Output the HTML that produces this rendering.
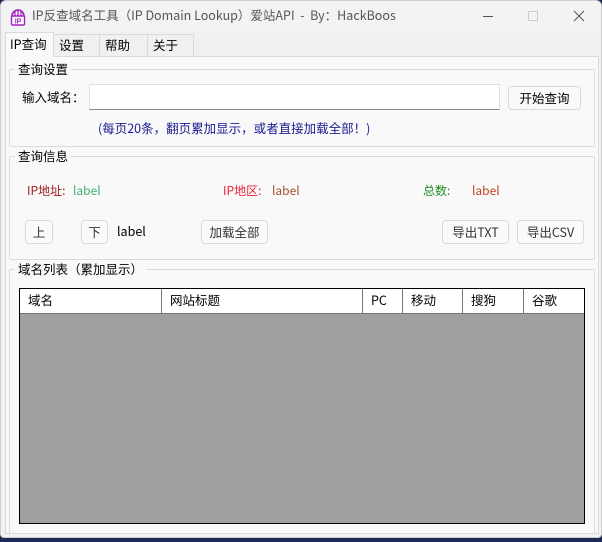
<!DOCTYPE html>
<html><head><meta charset="utf-8"><style>
*{margin:0;padding:0;box-sizing:border-box}
body{width:602px;height:542px;background:#1c2a55;font-family:"Noto Sans CJK SC","Liberation Sans",sans-serif;font-size:12px;line-height:16px;color:#000;position:relative;overflow:hidden}
.win{position:absolute;left:0;top:0;width:602px;height:538px;background:#f3f3f3;border:1px solid #cfcfcf;border-radius:6px 6px 4px 4px;overflow:hidden}
.a{position:absolute;white-space:nowrap;line-height:16px}
.tab{position:absolute;top:33px;height:22px;border:1px solid #dadada;border-bottom:none;background:#f0f0f0;font-size:12.5px;padding:2px 0 0 5px;line-height:16px}
.grp{position:absolute;border:1px solid #dcdcdc;border-radius:2px}
.gt{position:absolute;top:-9px;left:5px;background:#f9f9f9;padding:0 3px;font-size:12.5px;line-height:16px}
.btn{position:absolute;border:1px solid #dadada;border-radius:4px;background:#fafafa;text-align:center;font-size:12.5px;color:#333;line-height:21px}
.th{position:absolute;top:0;height:24px;border-right:1px solid #777;padding:3px 0 0 8px;font-size:12.5px;line-height:16px}
</style></head><body>
<div class="win">
<svg class="a" style="left:9px;top:7px" width="16" height="18" viewBox="0 0 16 18"><path d="M2 8 A6 6 0 0 1 14 8" fill="none" stroke="#a020c0" stroke-width="1.6"/><path d="M5 3 V8 M8 2 V8 M11 3 V8" stroke="#a020c0" stroke-width="1.2"/><rect x="1.5" y="8" width="13" height="9" rx="1" fill="#fff" stroke="#a020c0" stroke-width="1.4"/><text x="8" y="15.5" font-size="7" font-weight="bold" text-anchor="middle" fill="#a020c0" font-family="Liberation Sans">IP</text></svg>
<div class="a" style="left:31px;top:6px;font-size:12.5px;color:#555">IP反查域名工具（IP Domain Lookup）爱站API &nbsp;- &nbsp;By：HackBoos</div>
<div class="a" style="left:482px;top:15px;width:10px;border-top:1px solid #555"></div>
<div class="a" style="left:527px;top:10px;width:10px;height:10px;border:1px solid #ccc;border-radius:1px"></div>
<svg class="a" style="left:572px;top:9px" width="12" height="12"><path d="M1 1L11 11M11 1L1 11" stroke="#555" stroke-width="1"/></svg>
<div class="a" style="left:0;top:31px;width:602px;height:24px;background:#f0f0f0"></div>
<div class="a" style="left:4px;top:55px;width:594px;height:478px;background:#f9f9f9;border:1px solid #dadada"></div>
<div class="tab" style="left:52px;width:47px">设置</div>
<div class="tab" style="left:98px;width:49px">帮助</div>
<div class="tab" style="left:146px;width:47px">关于</div>
<div class="tab" style="left:4px;top:31px;height:25px;width:49px;background:#f9f9f9;padding-top:3px;padding-left:4px">IP查询</div>

<div class="grp" style="left:8px;top:68px;width:586px;height:78px"><div class="gt">查询设置</div></div>
<div class="a" style="left:21px;top:88px;font-size:12.5px">输入域名：</div>
<div class="a" style="left:88px;top:83px;width:411px;height:26px;background:#fff;border:1px solid #e0e0e0;border-bottom:1px solid #888"></div>
<div class="btn" style="left:507px;top:85px;width:73px;height:24px;color:#000">开始查询</div>
<div class="a" style="left:97px;top:119px;font-size:12.5px;color:#1a1a90">(每页20条，翻页累加显示，或者直接加载全部！)</div>

<div class="grp" style="left:8px;top:155px;width:586px;height:104px"><div class="gt">查询信息</div></div>
<div class="a" style="left:26px;top:182px;color:#a02020">IP地址:</div>
<div class="a" style="left:72px;top:182px;color:#3cb371">label</div>
<div class="a" style="left:222px;top:182px;color:#e8203c">IP地区:</div>
<div class="a" style="left:271px;top:182px;color:#a0522d">label</div>
<div class="a" style="left:422px;top:182px;color:#1e8c1e">总数:</div>
<div class="a" style="left:471px;top:182px;color:#c04020">label</div>
<div class="btn" style="left:24px;top:219px;width:28px;height:24px">上</div>
<div class="btn" style="left:80px;top:219px;width:27px;height:24px">下</div>
<div class="a" style="left:116px;top:222px;font-size:12.5px">label</div>
<div class="btn" style="left:200px;top:219px;width:67px;height:24px">加载全部</div>
<div class="btn" style="left:441px;top:219px;width:67px;height:24px">导出TXT</div>
<div class="btn" style="left:516px;top:219px;width:67px;height:24px">导出CSV</div>

<div class="grp" style="left:8px;top:268px;width:586px;height:265px"><div class="gt">域名列表（累加显示）</div></div>
<div class="a" style="left:18px;top:287px;width:566px;height:236px;background:#a0a0a0;border:1px solid #000">
<div class="a" style="left:0;top:0;width:564px;height:25px;background:#fff;border-bottom:1px solid #777"></div>
<div class="th" style="left:0;width:142px">域名</div>
<div class="th" style="left:142px;width:201px">网站标题</div>
<div class="th" style="left:343px;width:40px">PC</div>
<div class="th" style="left:383px;width:60px">移动</div>
<div class="th" style="left:443px;width:61px">搜狗</div>
<div class="th" style="left:504px;width:60px;border-right:none">谷歌</div>
</div>
</div>
</body></html>
